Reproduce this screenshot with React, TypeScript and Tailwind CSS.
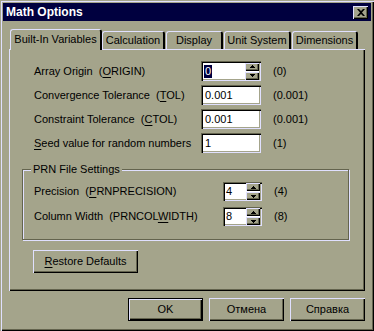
import React from 'react';

const raised =
  'shadow-[inset_1px_1px_0_#e0e0ff,inset_-1px_-1px_0_#000,inset_-2px_-2px_0_#64644e]';
const sunken =
  'shadow-[inset_1px_1px_0_#64644e,inset_2px_2px_0_#000,inset_-1px_-1px_0_#e0e0ff,inset_-2px_-2px_0_#a4a48b]';

const U: React.FC<{ children: React.ReactNode }> = ({ children }) => (
  <span className="underline underline-offset-[2px] decoration-1">{children}</span>
);

// tiny up/down arrow buttons of a spin control
const Spin: React.FC = () => (
  <div className="flex flex-col gap-px">
    <div className={`w-[14px] h-[8px] bg-[#a4a48b] flex items-center justify-center ${raised}`}>
      <svg width="5" height="3" viewBox="0 0 5 3"><path d="M2 0h1v1h1v1h1v1H0V2h1V1h1z" fill="#000" /></svg>
    </div>
    <div className={`w-[14px] h-[8px] bg-[#a4a48b] flex items-center justify-center ${raised}`}>
      <svg width="5" height="3" viewBox="0 0 5 3"><path d="M0 0h5v1H4v1H3v1H2V2H1V1H0z" fill="#000" /></svg>
    </div>
  </div>
);

const Tab: React.FC<{ label: string; active?: boolean; className?: string }> = ({ label, active, className }) =>
  active ? (
    <div
      className={`relative z-10 h-[21px] -mb-px bg-[#a4a48b] border-l border-t border-[#e0e0ff] border-r-2 border-r-black rounded-t-[3px] flex items-center justify-center pb-[2px] ${className}`}
    >
      {label}
    </div>
  ) : (
    <div
      className={`h-[18px] bg-[#a4a48b] border-l border-t border-[#e0e0ff] border-r-2 border-r-black rounded-t-[3px] flex items-center justify-center ${className}`}
    >
      {label}
    </div>
  );

const Field: React.FC<{ label: React.ReactNode; value: string; def: string }> = ({ label, value, def }) => (
  <div className="flex items-center h-[20px]">
    <div className="w-[167px]">{label}</div>
    <div className={`w-[60px] h-[20px] bg-white flex items-center pl-[4px] ${sunken}`}>{value}</div>
    <div className="ml-[12px]">{def}</div>
  </div>
);

const SpinField: React.FC<{ label: React.ReactNode; value: React.ReactNode; def: string; labelW: string; boxW: string }> = ({
  label,
  value,
  def,
  labelW,
  boxW,
}) => (
  <div className="flex items-center h-[19px]">
    <div className={labelW}>{label}</div>
    <div className={`${boxW} h-[19px] bg-white flex items-center justify-between pl-[3px] pr-[2px] ${sunken}`}>
      <span>{value}</span>
      <Spin />
    </div>
    <div className="ml-[12px]">{def}</div>
  </div>
);

const App: React.FC = () => {
  return (
    <div
      className="w-[374px] h-[331px] bg-[#a4a48b] p-[3px] flex flex-col text-black text-[11px] leading-none shadow-[inset_1px_1px_0_#a4a48b,inset_2px_2px_0_#e0e0ff,inset_-1px_-1px_0_#000,inset_-2px_-2px_0_#64644e]"
      style={{ fontFamily: '"Liberation Sans", Arial, sans-serif' }}
    >
      {/* Title bar */}
      <div className="h-[18px] bg-[#00003f] flex items-center justify-between pl-[3px] pr-[3px]">
        <span className="text-white font-bold text-[12px]">Math Options</span>
        <div className={`w-[15px] h-[13px] bg-[#a4a48b] flex items-center justify-center ${raised}`}>
          <svg width="8" height="7" viewBox="0 0 8 7">
            <path d="M0 0h2l2 2 2-2h2L5 3.5 8 7H6L4 5 2 7H0l3-3.5z" fill="#000" />
          </svg>
        </div>
      </div>

      {/* Tabs */}
      <div className="mt-[8px] ml-[7px] flex items-end h-[20px]">
        <Tab label="Built-In Variables" active className="w-[92px]" />
        <Tab label="Calculation" className="w-[63px]" />
        <Tab label="Display" className="w-[57px] ml-[1px]" />
        <Tab label="Unit System" className="w-[67px] ml-[1px]" />
        <Tab label="Dimensions" className="w-[66px] ml-[1px]" />
      </div>

      {/* Panel */}
      <div className="ml-[6px] w-[356px] h-[242px] pl-[25px] pt-[12px] flex flex-col shadow-[inset_1px_1px_0_#e0e0ff,inset_-1px_-1px_0_#000,inset_-2px_-2px_0_#64644e]">
        <div className="flex flex-col gap-[4px]">
          <div className="flex items-center h-[20px]">
            <div className="w-[167px]">
              Array Origin&nbsp; (<U>O</U>RIGIN)
            </div>
            <div className={`w-[60px] h-[20px] bg-white flex items-center justify-between pl-[3px] pr-[2px] ${sunken}`}>
              <span className="bg-[#00003f] text-white px-[1px] py-[1px]">0</span>
              <Spin />
            </div>
            <div className="ml-[12px]">(0)</div>
          </div>
          <Field
            label={
              <>
                Convergence Tolerance&nbsp; (<U>T</U>OL)
              </>
            }
            value="0.001"
            def="(0.001)"
          />
          <Field
            label={
              <>
                Constraint Tolerance&nbsp; (<U>C</U>TOL)
              </>
            }
            value="0.001"
            def="(0.001)"
          />
          <Field
            label={
              <>
                <U>S</U>eed value for random numbers
              </>
            }
            value="1"
            def="(1)"
          />
        </div>

        {/* PRN group box */}
        <div className="relative mt-[16px] -ml-[12px] w-[327px] h-[71px] border border-[#64644e] shadow-[1px_1px_0_#e0e0ff,inset_1px_1px_0_#e0e0ff] pl-[11px] pt-[12px] flex flex-col gap-[6px]">
          <span className="absolute -top-[6px] left-[8px] bg-[#a4a48b] px-[2px]">PRN File Settings</span>
          <SpinField
            label={
              <>
                Precision&nbsp; (<U>P</U>RNPRECISION)
              </>
            }
            value="4"
            def="(4)"
            labelW="w-[189px]"
            boxW="w-[39px]"
          />
          <SpinField
            label={
              <>
                Column Width&nbsp; (PRNCOL<U>W</U>IDTH)
              </>
            }
            value="8"
            def="(8)"
            labelW="w-[189px]"
            boxW="w-[39px]"
          />
        </div>

        <div className={`mt-[10px] -ml-[1px] w-[105px] h-[23px] flex items-center justify-center ${raised}`}>
          <span>
            <U>R</U>estore Defaults
          </span>
        </div>
      </div>

      {/* Dialog buttons */}
      <div className="mt-[7px] w-[362px] flex justify-end gap-[6px]">
        <div className="w-[75px] h-[23px] border border-black">
          <div className={`w-full h-full flex items-center justify-center ${raised}`}>OK</div>
        </div>
        <div className={`w-[75px] h-[23px] flex items-center justify-center ${raised}`}>Отмена</div>
        <div className={`w-[75px] h-[23px] flex items-center justify-center ${raised}`}>Справка</div>
      </div>
    </div>
  );
};

export default App;
